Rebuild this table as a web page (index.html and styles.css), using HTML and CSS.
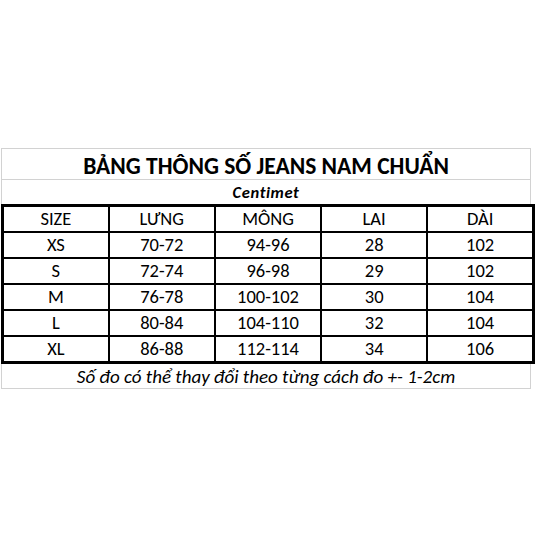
FILE: index.html
```html
<!DOCTYPE html>
<html lang="vi">
<head>
<meta charset="utf-8">
<link rel="stylesheet" href="styles.css">
</head>
<body>
<div class="sheet">
  <div class="title-row">BẢNG THÔNG SỐ JEANS NAM CHUẨN</div>
  <div class="unit-row">Centimet</div>
  <table class="sizes">
    <tr><td>SIZE</td><td>LƯNG</td><td>MÔNG</td><td>LAI</td><td>DÀI</td></tr>
    <tr><td>XS</td><td>70-72</td><td>94-96</td><td>28</td><td>102</td></tr>
    <tr><td>S</td><td>72-74</td><td>96-98</td><td>29</td><td>102</td></tr>
    <tr><td>M</td><td>76-78</td><td>100-102</td><td>30</td><td>104</td></tr>
    <tr><td>L</td><td>80-84</td><td>104-110</td><td>32</td><td>104</td></tr>
    <tr><td>XL</td><td>86-88</td><td>112-114</td><td>34</td><td>106</td></tr>
  </table>
  <div class="note-row">Số đo có thể thay đổi theo từng cách đo +- 1-2cm</div>
</div>
</body>
</html>
```

FILE: styles.css
```css
html, body {
  margin: 0;
  padding: 0;
  background: #ffffff;
}
body {
  font-family: "Carlito", "Lato", "Open Sans", sans-serif;
  color: #000000;
}
.sheet {
  padding-top: 148px;
  padding-left: 1px;
}
.title-row {
  width: 528px;
  height: 30px;
  border: 1px solid #d2d2d2;
  border-bottom: none;
  font-weight: 700;
  font-size: 23.5px;
  line-height: 34px;
  text-align: center;
}
.unit-row {
  width: 528px;
  height: 24px;
  border: 1px solid #d2d2d2;
  border-bottom: none;
  font-weight: 700;
  font-style: italic;
  font-size: 16.5px;
  letter-spacing: 0.6px;
  line-height: 25px;
  text-align: center;
}
.sizes {
  width: 534px;
  border-collapse: collapse;
  border: 3px solid #000000;
  table-layout: fixed;
}
.sizes td {
  border: 2px solid #000000;
  height: 24px;
  padding: 0;
  font-size: 18.5px;
  line-height: 24px;
  text-align: center;
  box-sizing: border-box;
}
.note-row {
  width: 528px;
  height: 24px;
  border: 1px solid #d2d2d2;
  border-top: none;
  font-style: italic;
  font-size: 19px;
  line-height: 26px;
  text-align: center;
}
```
